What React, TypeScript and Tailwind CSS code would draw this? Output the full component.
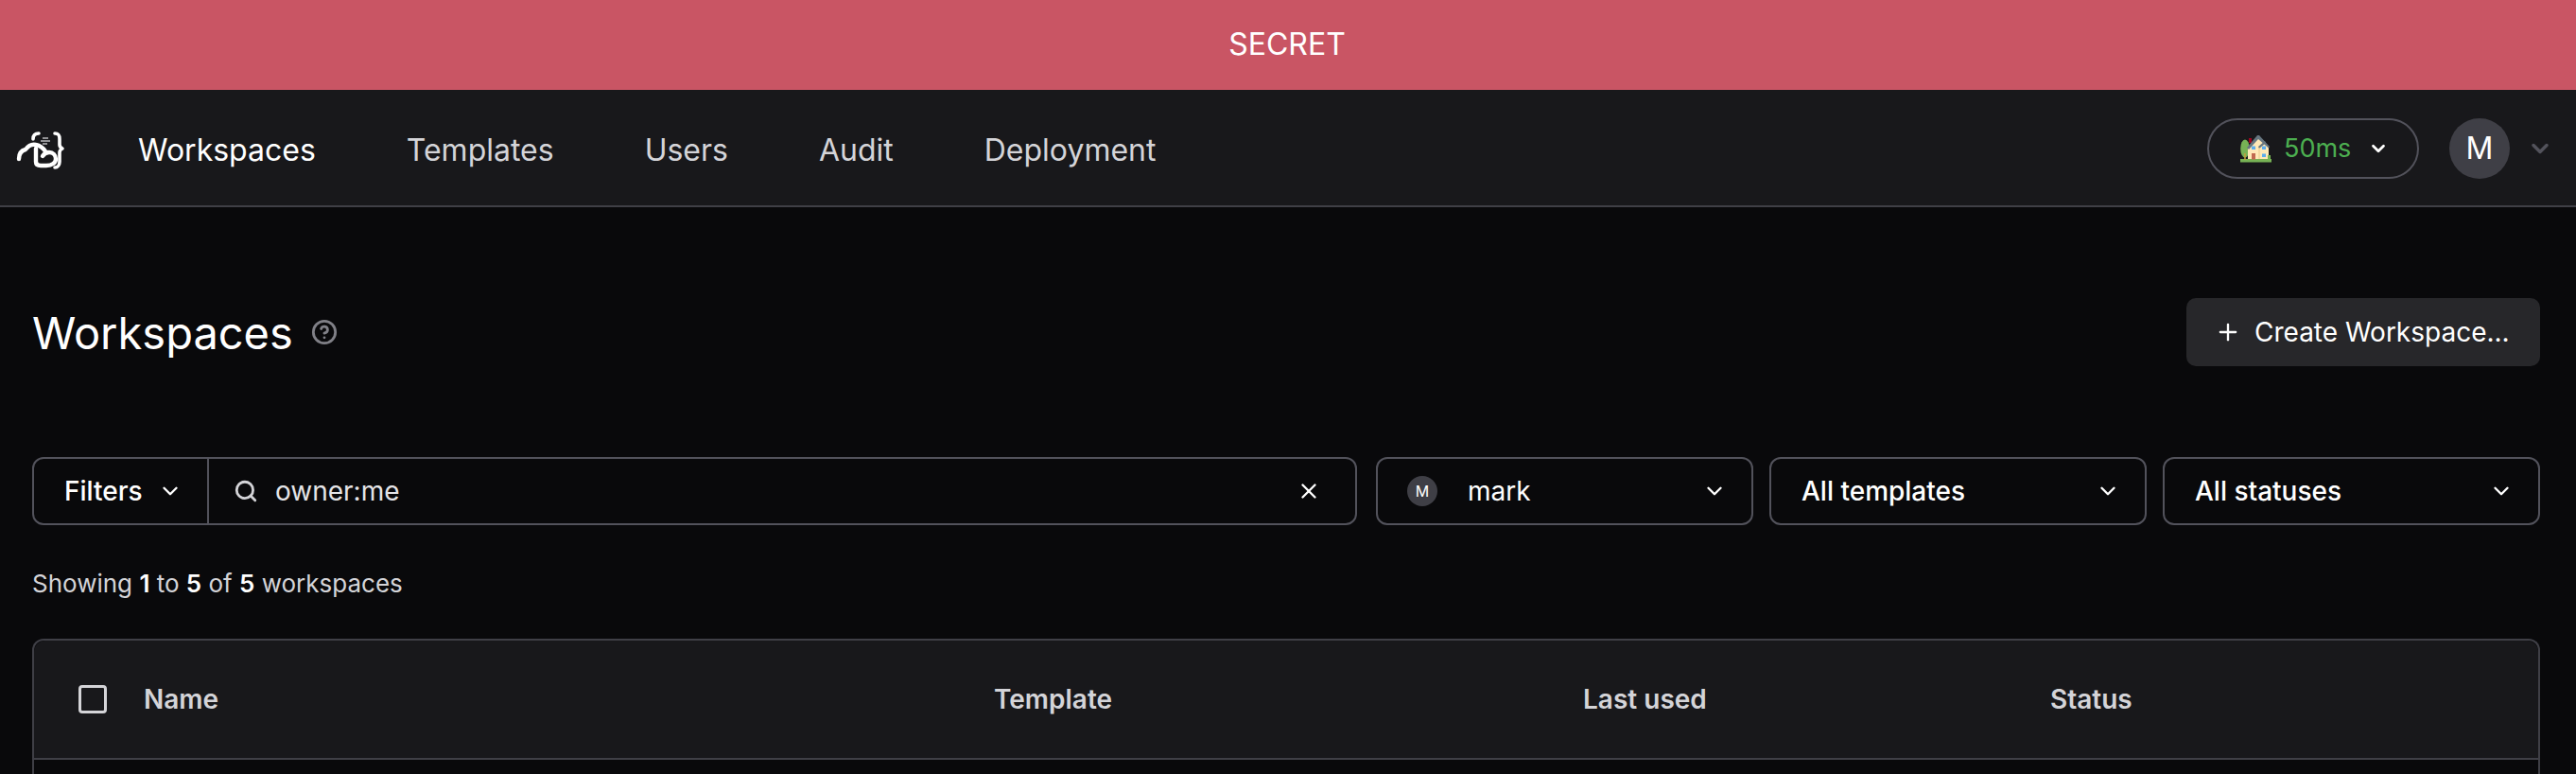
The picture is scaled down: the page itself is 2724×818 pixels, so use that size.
import { ChevronDown, Plus, Search, X, CircleHelp } from "lucide-react";

const navItems = ["Templates", "Users", "Audit", "Deployment"];

function Logo() {
  return (
    <svg width="64" height="50" viewBox="0 0 64 50" fill="none" stroke="#fff" strokeLinecap="round" strokeLinejoin="round" className="mt-[6px]">
      <path d="M10 33C10 27 13 24 17 23C20 19 24 17 28 18C33 19 36 22 38 25" strokeWidth="4.4" />
      <path d="M28 22V36C28 39 30 40 33 40H39C45 40 49 37 49 33C49 29 46 26 42 26C39 26 37 27 35 30" strokeWidth="4.4" />
      <path d="M25 12C25 8 27 6 31 6" strokeWidth="3.6" />
      <path d="M48 6C52 6 53 8 53 12V18C53 20 54 21 56 22C54 23 53 24 53 26V36C53 39 51 42 48 42" strokeWidth="3.6" />
      <path d="M35 11H41M33 14H43M35 17H40" strokeWidth="1.3" stroke="#b9b9bd" strokeLinecap="butt" />
    </svg>
  );
}

function HouseEmoji() {
  return (
    <svg width="33" height="30" viewBox="0 0 33 30" className="shrink-0">
      <rect x="0" y="26" width="33" height="3.5" fill="#77b255" />
      <ellipse cx="5" cy="15" rx="4.8" ry="9.5" fill="#77b255" />
      <rect x="4.2" y="20" width="1.5" height="7" fill="#c1a03f" />
      <rect x="9" y="4" width="3" height="5" fill="#a0041e" />
      <path d="M8 14 19 3l11 11v12H8z" fill="#ffe8b6" />
      <path d="M7 14 18 1h2l11 12-1 1.5L19 5 9 16z" fill="#66757f" />
      <path d="M19 13l7-6 1 2-7 6z" fill="#66757f" />
      <rect x="19.5" y="14" width="1" height="12" fill="#e8c98a" />
      <rect x="12" y="20" width="4" height="6.5" fill="#c1694f" />
      <rect x="12" y="12.5" width="4" height="3.5" fill="#5dadec" />
      <rect x="23" y="12.5" width="4" height="3.5" fill="#5dadec" />
      <rect x="23" y="20.5" width="4" height="3.5" fill="#5dadec" />
      <rect x="29" y="22" width="3" height="4" fill="#77b255" />
    </svg>
  );
}

function SelectBox({ label, avatar }: { label: string; avatar?: boolean }) {
  return (
    <div className={avatar ? "flex h-[72px] w-[399px] items-center justify-between rounded-xl border-2 border-[#52525b] pl-[31px] pr-[26px]" : "flex h-[72px] w-[399px] items-center justify-between rounded-xl border-2 border-[#52525b] pl-[32px] pr-[26px]"}>
      <div className="flex items-center">
        {avatar && (
          <span className="mr-[32px] flex h-[32px] w-[32px] items-center justify-center rounded-full bg-[#3f3f46] text-[16px] text-white">
            M
          </span>
        )}
        <span className={avatar ? "text-[28px] text-white" : "text-[28px] font-[450] text-white"}>{label}</span>
      </div>
      <ChevronDown size={26} color="#fff" strokeWidth={2.2} />
    </div>
  );
}

export default function App() {
  return (
    <div className="flex h-[818px] flex-col overflow-hidden bg-[#09090b] font-['Inter',sans-serif]">
      <div className="flex h-[95px] shrink-0 items-center justify-center bg-[#c95564] pb-[2px] pr-[2px] text-[32px] text-white">
        SECRET
      </div>

      <nav className="flex h-[124px] shrink-0 items-center justify-between border-b-2 border-[#3f3f46] bg-[#18181b] pl-[10px] pr-[24px] pt-[2px]">
        <div className="flex items-center">
          <Logo />
          <div className="ml-[72px] mt-[4px] flex items-center gap-[96px] text-[32px] text-[#d4d4d8]">
            <span className="text-white">Workspaces</span>
            {navItems.map((item) => (
              <span key={item}>{item}</span>
            ))}
          </div>
        </div>
        <div className="flex items-center">
          <div className="flex h-[64px] w-[224px] items-center rounded-full border-2 border-[#52525b] pl-[33px]">
            <HouseEmoji />
            <span className="ml-[13px] text-[27px] text-[#4caf50]">50ms</span>
            <ChevronDown size={22} color="#fff" strokeWidth={3} className="ml-[18px]" />
          </div>
          <div className="ml-[32px] flex h-[64px] w-[64px] items-center justify-center rounded-full bg-[#3f3f46] text-[32px] text-white">
            M
          </div>
          <ChevronDown size={28} color="#52525b" strokeWidth={3} className="ml-[18px]" />
        </div>
      </nav>

      <main className="flex flex-1 flex-col pl-[34px] pr-[38px]">
        <div className="mt-[96px] flex items-center justify-between">
          <div className="flex items-center">
            <h1 className="text-[47px] font-normal leading-none text-white">Workspaces</h1>
            <CircleHelp size={28} color="#808087" strokeWidth={2.4} className="ml-[19px]" />
          </div>
          <button type="button" className="flex h-[72px] w-[374px] items-center rounded-[10px] bg-[#27272a] pl-[30px] text-[28px] text-white">
            <Plus size={28} color="#fff" strokeWidth={2} className="mr-[14px]" />
            Create Workspace...
          </button>
        </div>

        <div className="mt-[96px] flex items-center gap-[17px]">
          <div className="mr-[3px] flex h-[72px] flex-1 items-center rounded-xl border-2 border-[#52525b]">
            <div className="flex h-full w-[185px] items-center border-r-2 border-[#52525b] pl-[32px]">
              <span className="text-[28px] font-[450] text-white">Filters</span>
              <ChevronDown size={26} color="#fff" strokeWidth={2.2} className="ml-[16px]" />
            </div>
            <Search size={26} color="#d4d4d8" strokeWidth={2.6} className="ml-[26px]" />
            <span className="ml-[18px] text-[28px] text-[#e4e4e7]">owner:me</span>
            <X size={26} color="#fff" strokeWidth={2.2} className="ml-auto mr-[36px]" />
          </div>
          <SelectBox label="mark" avatar />
          <SelectBox label="All templates" />
          <SelectBox label="All statuses" />
        </div>

        <p className="mt-[42px] text-[26px] text-[#d4d4d8]">
          Showing <b className="font-semibold text-white">1</b> to <b className="font-semibold text-white">5</b> of{" "}
          <b className="font-semibold text-white">5</b> workspaces
        </p>

        <div className="mt-[39px] flex-1 rounded-t-xl border-2 border-b-0 border-[#3f3f46]">
          <div className="flex h-[126px] items-center rounded-t-xl border-b-2 border-[#3f3f46] bg-[#18181b] text-[28px] font-semibold text-[#d4d4d8]">
            <span className="ml-[47px] h-[30px] w-[30px] rounded border-[3px] border-[#d4d4d8]" />
            <span className="ml-[39px] w-[899px]">Name</span>
            <span className="w-[623px]">Template</span>
            <span className="w-[494px]">Last used</span>
            <span>Status</span>
          </div>
        </div>
      </main>
    </div>
  );
}
